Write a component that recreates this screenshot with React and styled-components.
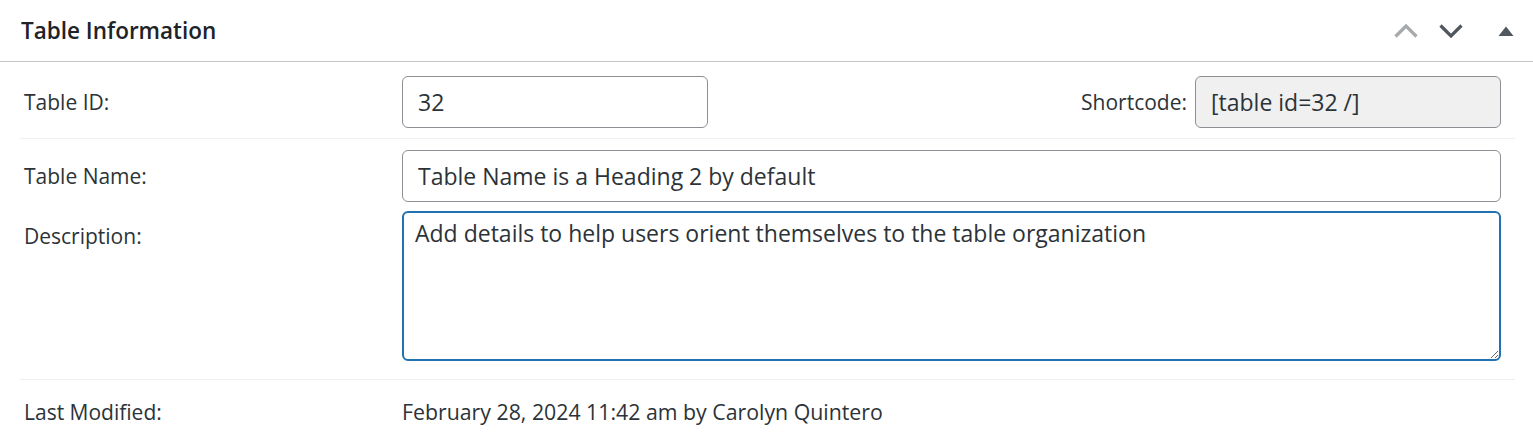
import React from 'react';
import styled, { createGlobalStyle } from 'styled-components';

const GlobalStyle = createGlobalStyle`
  body {
    margin: 0;
    background: #fff;
    font-family: "Open Sans", "Noto Sans", sans-serif;
    color: #1d2327;
  }
`;

const Panel = styled.section`
  background: #fff;
`;

const Header = styled.header`
  display: flex;
  align-items: center;
  justify-content: space-between;
  height: 61px;
  padding: 0 19px 0 21px;
  border-bottom: 1px solid #c3c4c7;
`;

const Title = styled.h2`
  margin: 0;
  font-size: 22.5px;
  font-weight: 600;
  color: #1d2327;
`;

const Handles = styled.div`
  display: flex;
  align-items: center;
`;

const HandleButton = styled.button`
  display: flex;
  align-items: center;
  justify-content: center;
  padding: 0;
  margin-left: ${(p) => p.$gap || '0'};
  border: 0;
  background: none;
  color: ${(p) => (p.$muted ? '#a7aaad' : '#50575e')};
  cursor: pointer;
`;

const Body = styled.div`
  padding: 0 18px 0 20px;
`;

const Row = styled.div`
  display: flex;
  align-items: ${(p) => (p.$top ? 'flex-start' : 'center')};
  padding: ${(p) => p.$pad};
  border-bottom: ${(p) => (p.$divider ? '1px solid #f0f0f1' : '0')};
`;

const Label = styled.div`
  flex: 0 0 378px;
  padding-left: 4px;
  font-size: 21px;
  color: #2c3338;
  padding-top: ${(p) => (p.$top ? '11px' : '0')};
`;

const Field = styled.div`
  flex: 1;
  display: flex;
  align-items: center;
  padding-right: 14px;
`;

const TextInput = styled.input`
  box-sizing: border-box;
  width: ${(p) => p.$width || '100%'};
  height: 52px;
  padding: 0 15px;
  border: 1px solid #8c8f94;
  border-radius: 6px;
  background: ${(p) => (p.readOnly ? '#f0f0f1' : '#fff')};
  font-family: inherit;
  font-size: 23px;
  color: #2c3338;
  outline: none;
`;

const Spacer = styled.div`
  flex: 1;
`;

const InlineLabel = styled.span`
  font-size: 21px;
  color: #2c3338;
  margin-right: 8px;
`;

const TextArea = styled.textarea`
  box-sizing: border-box;
  display: block;
  width: 100%;
  height: 150px;
  padding: 4px 11px;
  border: 2px solid #2271b1;
  border-radius: 6px;
  font-family: inherit;
  font-size: 23px;
  line-height: 1.4;
  color: #2c3338;
  outline: none;
`;

const Meta = styled.div`
  font-size: 21.3px;
  color: #2c3338;
`;

const ChevronUp = () => (
  <svg width="24" height="14" viewBox="0 0 24 14" fill="none" stroke="currentColor" strokeWidth="3.2">
    <path d="M1.5 12.5 L12 2 L22.5 12.5" />
  </svg>
);

const ChevronDown = () => (
  <svg width="24" height="14" viewBox="0 0 24 14" fill="none" stroke="currentColor" strokeWidth="3.2">
    <path d="M1.5 1.5 L12 12 L22.5 1.5" />
  </svg>
);

const TriangleUp = () => (
  <svg width="16" height="10" viewBox="0 0 16 10" fill="currentColor">
    <path d="M0.5 10 L8 0.5 L15.5 10 Z" />
  </svg>
);

const App = () => (
  <>
    <GlobalStyle />
    <Panel>
      <Header>
        <Title>Table Information</Title>
        <Handles>
          <HandleButton $muted aria-label="Move up">
            <ChevronUp />
          </HandleButton>
          <HandleButton $gap="21px" aria-label="Move down">
            <ChevronDown />
          </HandleButton>
          <HandleButton $gap="35px" aria-label="Toggle panel">
            <TriangleUp />
          </HandleButton>
        </Handles>
      </Header>
      <Body>
        <Row $divider $pad="14px 0 10px">
          <Label>Table ID:</Label>
          <Field>
            <TextInput $width="306px" defaultValue="32" />
            <Spacer />
            <InlineLabel>Shortcode:</InlineLabel>
            <TextInput $width="306px" readOnly defaultValue="[table id=32 /]" />
          </Field>
        </Row>
        <Row $pad="11px 0 9px">
          <Label>Table Name:</Label>
          <Field>
            <TextInput defaultValue="Table Name is a Heading 2 by default" />
          </Field>
        </Row>
        <Row $top $divider $pad="0 0 18px">
          <Label $top>Description:</Label>
          <Field>
            <TextArea defaultValue="Add details to help users orient themselves to the table organization" />
          </Field>
        </Row>
        <Row $pad="17px 0">
          <Label>Last Modified:</Label>
          <Meta>February 28, 2024 11:42 am by Carolyn Quintero</Meta>
        </Row>
      </Body>
    </Panel>
  </>
);

export default App;
